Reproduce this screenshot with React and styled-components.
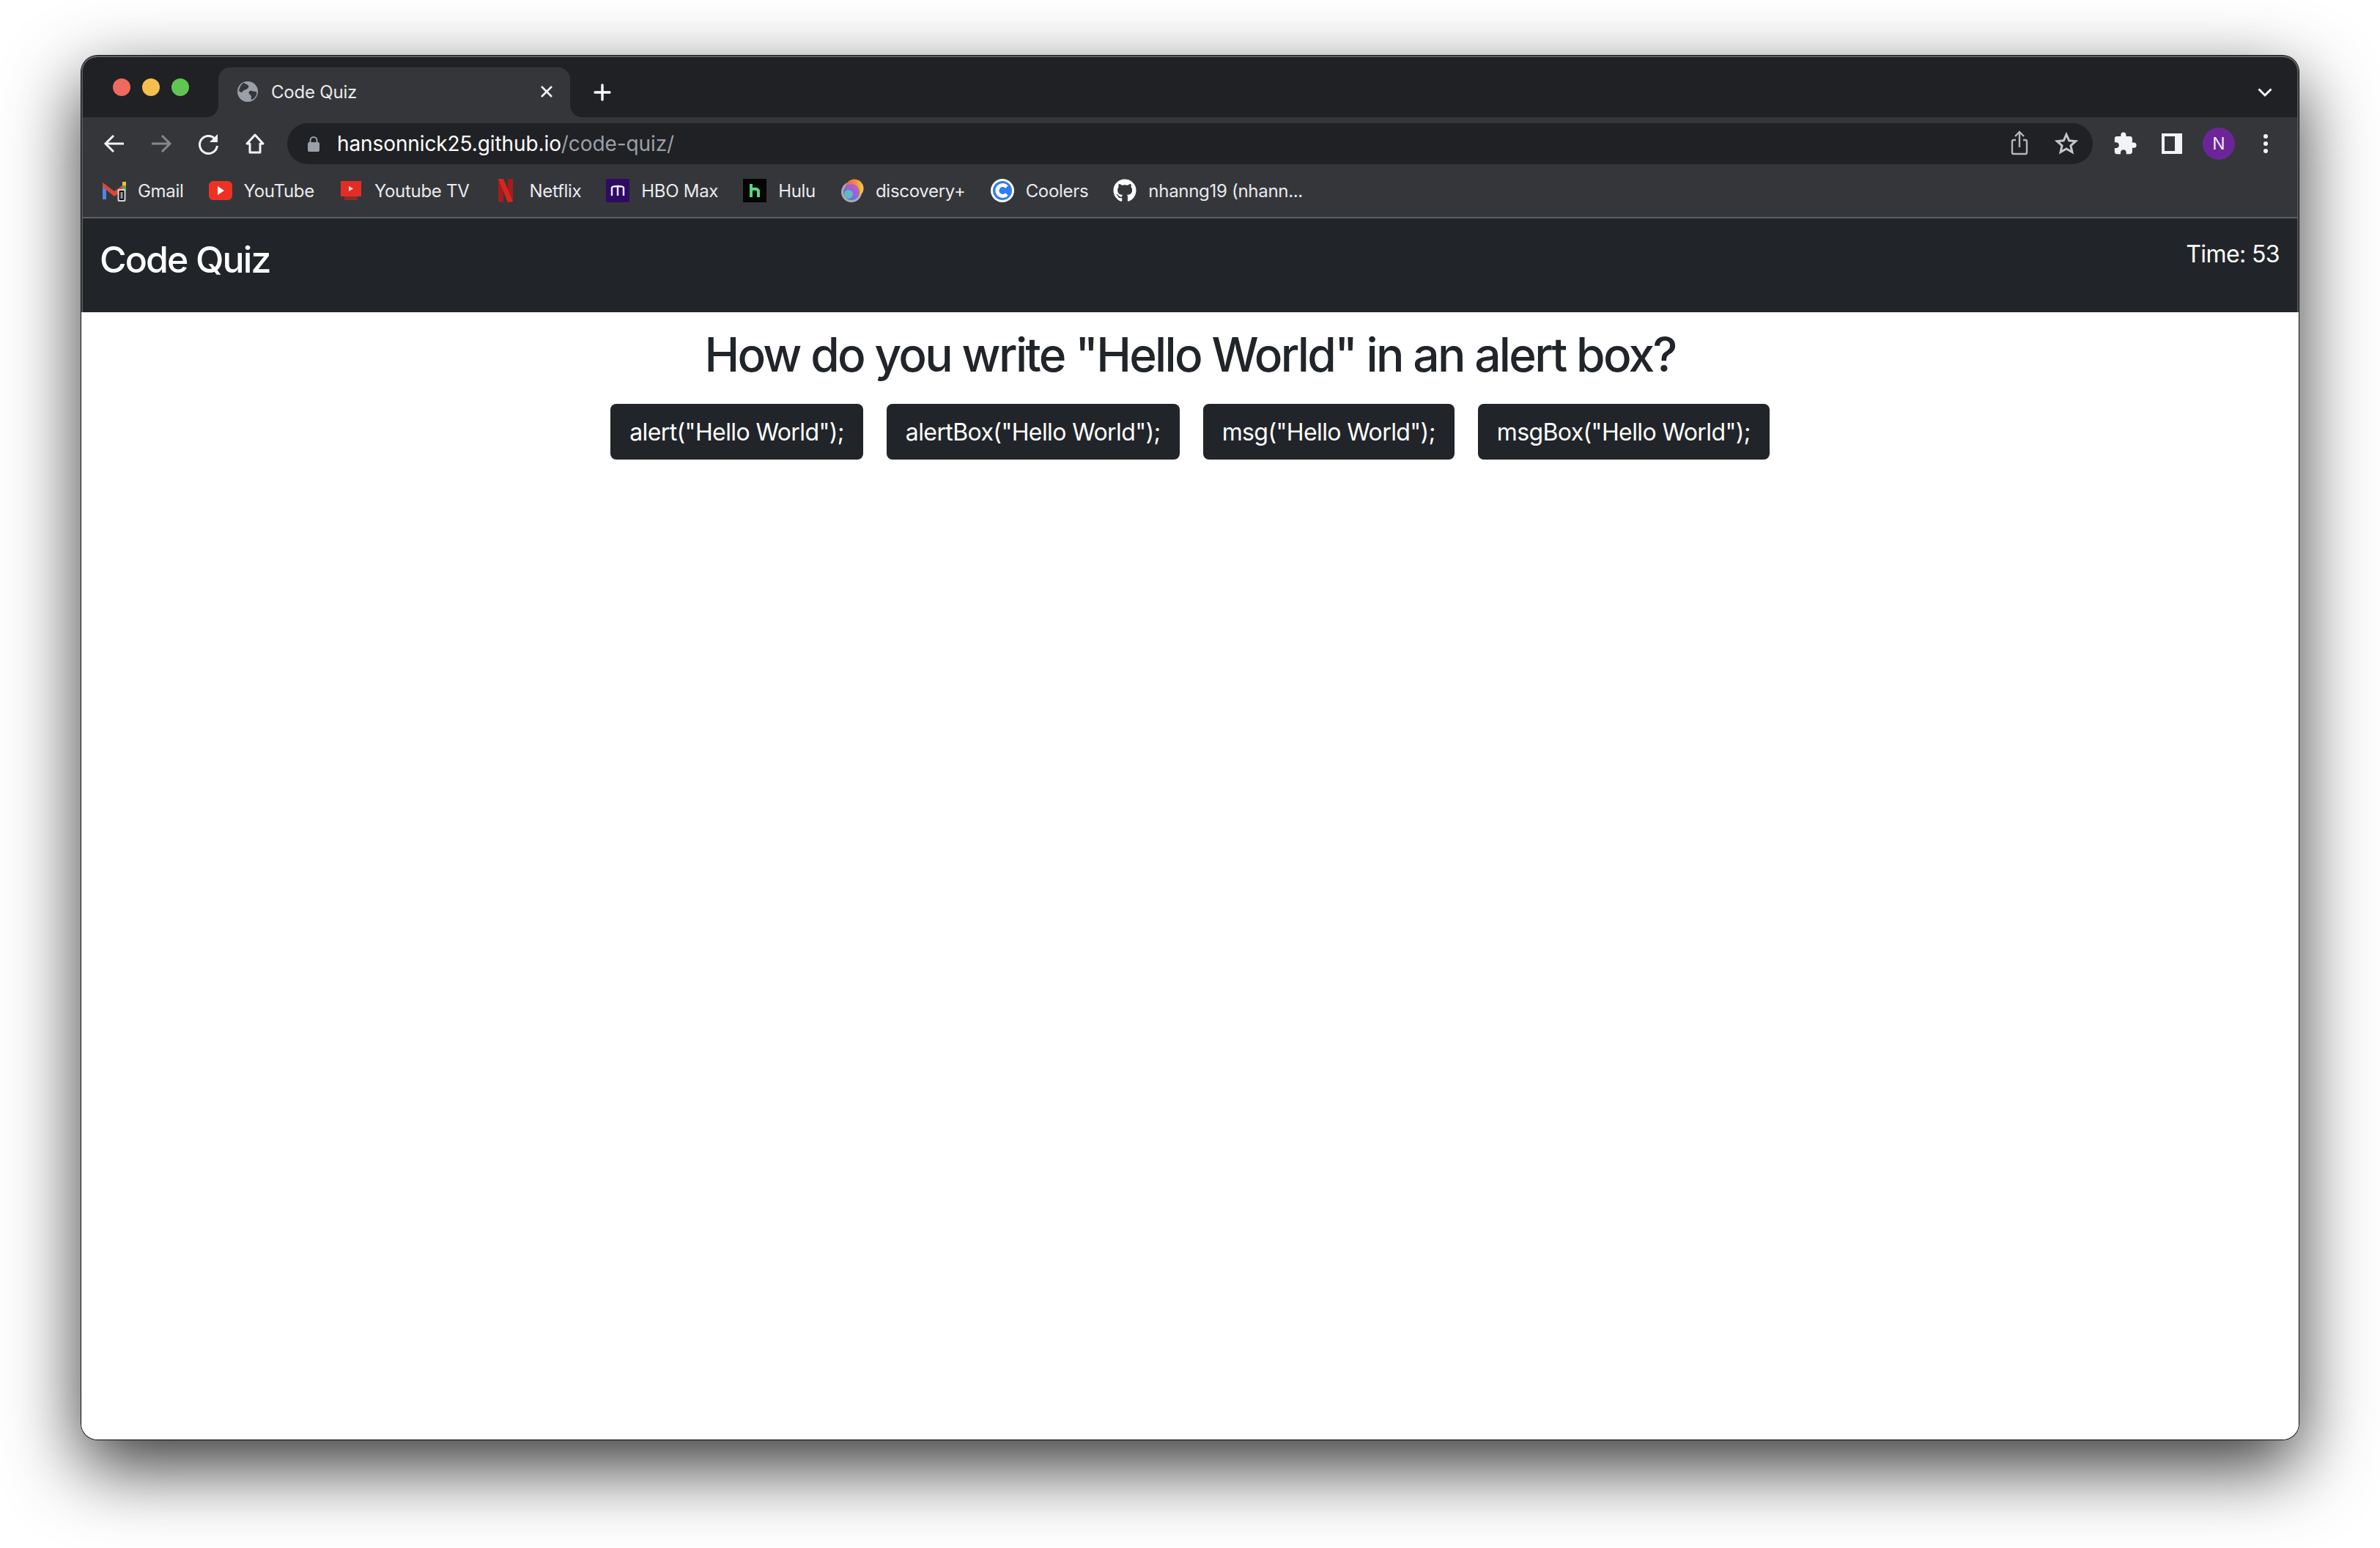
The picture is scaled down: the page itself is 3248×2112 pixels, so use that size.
import React from 'react';
import styled, { createGlobalStyle } from 'styled-components';
import { MdExtension } from 'react-icons/md';
import { FaGithub } from 'react-icons/fa';

const GlobalStyle = createGlobalStyle`
  html, body {
    margin: 0;
    padding: 0;
    background: #fff;
  }
  * { box-sizing: border-box; }
`;

const chromeFont = `Inter, "Liberation Sans", sans-serif`;

const Page = styled.div`
  width: 3248px;
  height: 2112px;
  padding: 76px 111px 148px;
  overflow: hidden;
`;

const Window = styled.div`
  position: relative;
  height: 100%;
  display: flex;
  flex-direction: column;
  border-radius: 22px;
  overflow: hidden;
  background: #fff;
  box-shadow: 0 36px 100px rgba(0, 0, 0, 0.8), 0 0 0 1px #111;

  &::after {
    content: '';
    position: absolute;
    inset: 0;
    border-radius: 22px;
    pointer-events: none;
    box-shadow: inset 0 2px 0 #5f6063, inset 2px 0 0 #55565a, inset -2px 0 0 #55565a;
    clip-path: inset(0 0 1538px 0);
  }
`;

const TabStrip = styled.div`
  height: 84px;
  flex: none;
  display: flex;
  align-items: flex-end;
  background: #202124;
  padding-left: 187px;
  padding-right: 36px;
  color: #fff;
  font-family: ${chromeFont};
`;

const Lights = styled.div`
  position: absolute;
  top: 31px;
  left: 43px;
  display: flex;
  gap: 16px;
`;

const Light = styled.span`
  width: 24px;
  height: 24px;
  border-radius: 50%;
  background: ${p => p.$color};
`;

const Tab = styled.div`
  position: relative;
  width: 480px;
  height: 68px;
  display: flex;
  align-items: center;
  padding: 0 22px 2px 26px;
  gap: 18px;
  background: #35363a;
  border-radius: 16px 16px 0 0;

  &::before, &::after {
    content: '';
    position: absolute;
    bottom: 0;
    width: 16px;
    height: 16px;
  }
  &::before {
    left: -16px;
    background: radial-gradient(circle at 0 0, transparent 15.5px, #35363a 16px);
  }
  &::after {
    right: -16px;
    background: radial-gradient(circle at 100% 0, transparent 15.5px, #35363a 16px);
  }
`;

const TabTitle = styled.span`
  flex: 1;
  font-size: 24px;
  letter-spacing: -0.2px;
  color: #e8eaed;
`;

const NewTab = styled.div`
  margin-left: 32px;
  height: 68px;
  display: flex;
  align-items: center;
`;

const StripEnd = styled.div`
  margin-left: auto;
  height: 68px;
  display: flex;
  align-items: center;
`;

const Toolbar = styled.div`
  height: 72px;
  flex: none;
  display: flex;
  align-items: center;
  background: #35363a;
  padding-left: 27px;
`;

const NavIcons = styled.div`
  display: flex;
  align-items: center;
  gap: 28px;
  margin-right: 26px;
`;

const NavIcon = styled.svg`
  display: block;
  width: 36px;
  height: 36px;
  flex: none;
  color: ${p => p.$dim ? '#85878a' : '#f1f3f4'};
`;

const Omnibox = styled.div`
  height: 56px;
  width: 2464px;
  flex: none;
  display: flex;
  align-items: center;
  padding: 0 20px 0 27px;
  border-radius: 28px;
  background: #202124;
  font-family: ${chromeFont};
  font-size: 28px;
  letter-spacing: -0.1px;
  color: #fff;
`;

const Url = styled.span`
  flex: 1;
  margin-left: 23px;
`;

const UrlPath = styled.span`
  color: #9aa0a6;
`;

const OmniIcons = styled.div`
  display: flex;
  align-items: center;
  gap: 30px;
`;

const ToolIcons = styled.div`
  display: flex;
  align-items: center;
  margin-left: 12px;
`;

const ToolSlot = styled.div`
  width: 64px;
  display: flex;
  align-items: center;
  justify-content: center;
`;

const Avatar = styled.div`
  width: 44px;
  height: 44px;
  border-radius: 50%;
  background: #6b2599;
  color: #f0e6f6;
  display: flex;
  align-items: center;
  justify-content: center;
  font-family: ${chromeFont};
  font-size: 23px;
`;

const Bookmarks = styled.div`
  height: 66px;
  flex: none;
  display: flex;
  align-items: center;
  gap: 34px;
  padding: 0 0 8px 29px;
  background: #35363a;
  border-bottom: 2px solid #5d5e61;
  font-family: ${chromeFont};
  font-size: 24px;
  letter-spacing: -0.3px;
  color: #e8eaed;
`;

const Bookmark = styled.div`
  display: flex;
  align-items: center;
  gap: 16px;
  white-space: nowrap;
`;

const Favicon = styled.svg`
  display: block;
  width: 32px;
  height: 32px;
  flex: none;
`;

const Navbar = styled.header`
  height: 128px;
  flex: none;
  display: flex;
  justify-content: space-between;
  align-items: flex-start;
  padding: 26px 26px 0 25px;
  background: #212529;
  color: #fff;
  font-family: Inter, sans-serif;
`;

const Brand = styled.div`
  font-size: 50px;
  font-weight: 500;
  line-height: 60px;
  letter-spacing: -1.9px;
`;

const Timer = styled.div`
  font-size: 32px;
  line-height: 46px;
  letter-spacing: -0.6px;
`;

const Main = styled.main`
  flex: 1;
  display: flex;
  flex-direction: column;
  align-items: center;
  gap: 29px;
  padding-top: 19px;
  background: #fff;
  font-family: Inter, sans-serif;
`;

const Question = styled.h2`
  margin: 0;
  font-size: 64px;
  font-weight: 500;
  line-height: 77px;
  letter-spacing: -2.66px;
  color: #212529;
`;

const Answers = styled.div`
  display: flex;
  gap: 32px;
`;

const Answer = styled.button`
  height: 76px;
  padding: 0 26px;
  border: none;
  border-radius: 8px;
  background: #212529;
  color: #fff;
  font-family: Inter, sans-serif;
  font-size: 32px;
  letter-spacing: -0.6px;
  white-space: nowrap;
`;

const Back = ({ dim, flip }) => (
  <NavIcon $dim={dim} viewBox="0 0 36 36" fill="none" stroke="currentColor" strokeWidth="3">
    <path d={flip ? 'M5 18h25M19 7l11 11-11 11' : 'M31 18H6M17 7 6 18l11 11'} />
  </NavIcon>
);

const Reload = () => (
  <NavIcon viewBox="0 0 36 36" fill="none" stroke="currentColor" strokeWidth="3">
    <path d="M27 11a12 12 0 1 0 3.4 10" />
    <path d="M31 5v11H20z" fill="currentColor" stroke="none" />
  </NavIcon>
);

const Home = () => (
  <NavIcon viewBox="0 0 36 36" fill="none" stroke="currentColor" strokeWidth="3">
    <path d="M18 6 7 18h4v12h14V18h4z" strokeLinejoin="round" />
  </NavIcon>
);

const Globe = () => (
  <Favicon as="svg" viewBox="0 0 28 28" style={{ width: 28, height: 28 }}>
    <circle cx="14" cy="14" r="14" fill="#9aa0a6" />
    <path d="M9 2c2 2 5 2 6 4s-1 4-3 5-4 1-5 3-3 1-5-1C3 8 5 4 9 2zM17 13c3-1 5 1 7 1s3 1 2 4-4 7-7 7c-1-2 1-4-1-6s-4-4-1-6z" fill="#35363a" />
  </Favicon>
);

const Close = () => (
  <svg width="20" height="20" viewBox="0 0 20 20" stroke="#f1f3f4" strokeWidth="2.6" style={{ display: 'block' }}>
    <path d="M3 3l14 14M17 3 3 17" />
  </svg>
);

const Plus = () => (
  <svg width="24" height="24" viewBox="0 0 24 24" stroke="#fff" strokeWidth="3.4" strokeLinecap="round" style={{ display: 'block' }}>
    <path d="M12 2v20M2 12h20" />
  </svg>
);

const Chevron = () => (
  <svg width="20" height="14" viewBox="0 0 20 14" fill="none" stroke="#f1f3f4" strokeWidth="3" style={{ display: 'block' }}>
    <path d="M1.500 2.500 10 11l8.500-8.500" />
  </svg>
);

const LockIcon = () => (
  <svg width="18" height="22" viewBox="0 0 18 22" style={{ display: 'block' }}>
    <rect x="1" y="9" width="16" height="13" rx="2" fill="#9aa0a6" />
    <path d="M4.500 10V6.500a4.500 4.500 0 0 1 9 0V10" fill="none" stroke="#9aa0a6" strokeWidth="2" />
  </svg>
);

const Share = () => (
  <svg width="36" height="36" viewBox="0 0 36 36" fill="none" stroke="#b4b6b8" strokeWidth="2.4" style={{ display: 'block' }}>
    <path d="M13 13H10a2 2 0 0 0-2 2v15a2 2 0 0 0 2 2h16a2 2 0 0 0 2-2V15a2 2 0 0 0-2-2h-3" />
    <path d="M18 23V3M12 8l6-6 6 6" />
  </svg>
);

const Star = () => (
  <svg width="32" height="32" viewBox="0 0 32 32" fill="none" stroke="#c4c6c8" strokeWidth="3" style={{ display: 'block' }}>
    <path d="m16 3.500 3.700 8.300 9 .9-6.800 6 2 8.800-7.900-4.600-7.900 4.600 2-8.800-6.800-6 9-.9z" />
  </svg>
);

const SidePanel = () => (
  <svg width="28" height="28" viewBox="0 0 28 28" style={{ display: 'block' }}>
    <path d="M0 0h28v28H0zM4 4v20h14V4z" fill="#f1f3f4" fillRule="evenodd" />
  </svg>
);

const Dots = () => (
  <svg width="8" height="28" viewBox="0 0 8 28" fill="#f1f3f4" style={{ display: 'block' }}>
    <circle cx="4" cy="4" r="3" />
    <circle cx="4" cy="14" r="3" />
    <circle cx="4" cy="24" r="3" />
  </svg>
);

const Gmail = () => (
  <Favicon viewBox="0 0 32 32">
    <path d="M0 8h5v20H0z" fill="#4a87e8" />
    <path d="M0 5l16 12L32 5v8L16 24 0 11z" fill="#d8483c" />
    <path d="M27 8h5v8h-5z" fill="#5aa95c" />
    <path d="M27 4h5v5h-5z" fill="#f2bd42" />
    <rect x="20.500" y="14" width="11" height="17" rx="2" fill="#d5d7d8" />
    <rect x="22.500" y="16" width="7" height="13" rx="1" fill="#111" />
    <rect x="24.500" y="18" width="3" height="9" fill="#9a9c9e" />
  </Favicon>
);

const Youtube = () => (
  <Favicon viewBox="0 0 32 32">
    <rect x="0" y="3" width="32" height="26" rx="6" fill="#ee3124" />
    <path d="m12 10 9 6-9 6z" fill="#fff" />
  </Favicon>
);

const YoutubeTv = () => (
  <Favicon viewBox="0 0 32 32">
    <rect x="2" y="3" width="28" height="21" fill="#e12d26" />
    <path d="M7 24h18v5H7z" fill="#8e2a27" />
    <path d="m13 10 6 3.500-6 3.500z" fill="#fbdcd9" />
  </Favicon>
);

const Netflix = () => (
  <Favicon viewBox="0 0 32 32">
    <path d="M6 0h7v32l-7-1z" fill="#a31d1a" />
    <path d="M19 0h7v31l-7 1z" fill="#a31d1a" />
    <path d="M6 0h7l13 31-7 1z" fill="#d8261f" />
  </Favicon>
);

const HboMax = () => (
  <Favicon viewBox="0 0 32 32">
    <rect width="32" height="32" rx="2" fill="#2e0b63" />
    <path d="M8 23V12.500c0-2.500 4-2.500 8-2.500s8 0 8 2.500V23M16 23V10" fill="none" stroke="#f2e9fb" strokeWidth="2.400" />
  </Favicon>
);

const Hulu = () => (
  <Favicon viewBox="0 0 32 32">
    <rect width="32" height="32" fill="#050505" />
    <path d="M11 7v18M11 15c2-2 10-2 10 2v8" fill="none" stroke="#56d982" strokeWidth="4" />
  </Favicon>
);

const Discovery = () => (
  <Favicon viewBox="0 0 32 32">
    <defs>
      <linearGradient id="discoveryWarm" x1="0" y1="0" x2="1" y2="0">
        <stop offset="0" stopColor="#ef5a45" />
        <stop offset="0.6" stopColor="#f2913a" />
        <stop offset="1" stopColor="#f4d23f" />
      </linearGradient>
      <linearGradient id="discoveryCool" x1="0" y1="1" x2="1" y2="0">
        <stop offset="0" stopColor="#3c78e8" />
        <stop offset="0.6" stopColor="#9a62d8" />
        <stop offset="1" stopColor="#e25bb0" />
      </linearGradient>
    </defs>
    <circle cx="15" cy="18" r="14" fill="#a9abae" />
    <circle cx="19" cy="13" r="12.500" fill="url(#discoveryWarm)" />
    <circle cx="15" cy="18" r="11" fill="url(#discoveryCool)" />
    <circle cx="11" cy="21" r="6" fill="#63c6b8" opacity="0.85" />
  </Favicon>
);

const Coolers = () => (
  <Favicon viewBox="0 0 32 32">
    <circle cx="16" cy="16" r="16" fill="#fff" />
    <circle cx="16" cy="16" r="13" fill="#2f7df6" />
    <path d="M22 11a7.500 7.500 0 1 0 0 10" fill="none" stroke="#fff" strokeWidth="5" />
  </Favicon>
);

const bookmarks = [
  { name: 'Gmail', icon: <Gmail /> },
  { name: 'YouTube', icon: <Youtube /> },
  { name: 'Youtube TV', icon: <YoutubeTv /> },
  { name: 'Netflix', icon: <Netflix /> },
  { name: 'HBO Max', icon: <HboMax /> },
  { name: 'Hulu', icon: <Hulu /> },
  { name: 'discovery+', icon: <Discovery /> },
  { name: 'Coolers', icon: <Coolers /> },
  { name: 'nhanng19 (nhann...', icon: <FaGithub size={32} color="#fff" /> },
];

const answers = [
  'alert("Hello World");',
  'alertBox("Hello World");',
  'msg("Hello World");',
  'msgBox("Hello World");',
];

const App = () => (
  <Page>
    <GlobalStyle />
    <Window>
      <TabStrip>
        <Lights>
          <Light $color="#ee6a5f" />
          <Light $color="#f5bf4f" />
          <Light $color="#5fc553" />
        </Lights>
        <Tab>
          <Globe />
          <TabTitle>Code Quiz</TabTitle>
          <Close />
        </Tab>
        <NewTab><Plus /></NewTab>
        <StripEnd><Chevron /></StripEnd>
      </TabStrip>

      <Toolbar>
        <NavIcons>
          <Back />
          <Back dim flip />
          <Reload />
          <Home />
        </NavIcons>
        <Omnibox>
          <LockIcon />
          <Url>hansonnick25.github.io<UrlPath>/code-quiz/</UrlPath></Url>
          <OmniIcons>
            <Share />
            <Star />
          </OmniIcons>
        </Omnibox>
        <ToolIcons>
          <ToolSlot><MdExtension size={34} color="#f1f3f4" /></ToolSlot>
          <ToolSlot><SidePanel /></ToolSlot>
          <ToolSlot><Avatar>N</Avatar></ToolSlot>
          <ToolSlot><Dots /></ToolSlot>
        </ToolIcons>
      </Toolbar>

      <Bookmarks>
        {bookmarks.map(b => (
          <Bookmark key={b.name}>
            {b.icon}
            <span>{b.name}</span>
          </Bookmark>
        ))}
      </Bookmarks>

      <Navbar>
        <Brand>Code Quiz</Brand>
        <Timer>Time: 53</Timer>
      </Navbar>

      <Main>
        <Question>How do you write "Hello World" in an alert box?</Question>
        <Answers>
          {answers.map(a => <Answer key={a}>{a}</Answer>)}
        </Answers>
      </Main>
    </Window>
  </Page>
);

export default App;
